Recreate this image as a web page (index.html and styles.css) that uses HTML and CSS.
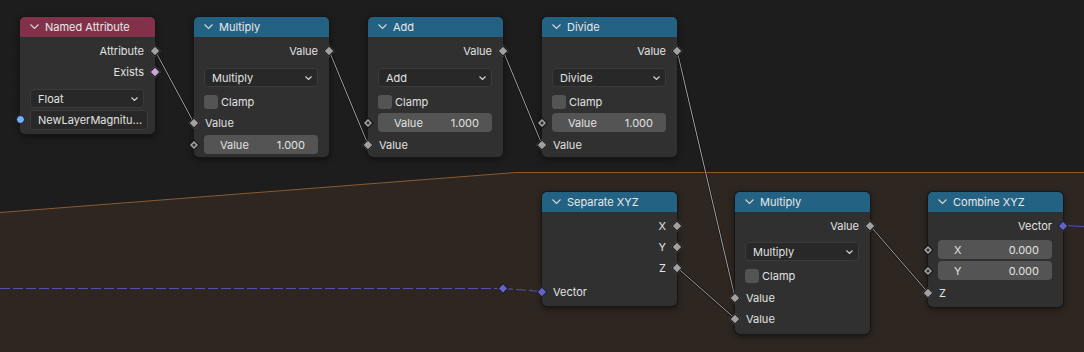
FILE: index.html
```html
<!DOCTYPE html>
<html lang="en">
<head>
    <meta charset="UTF-8">
    <title>Geometry Nodes</title>
    <link rel="stylesheet" href="styles.css">
</head>
<body>
<div class="editor">
    <svg class="backdrop" width="1084" height="352" viewBox="0 0 1084 352">
        <defs>
            <pattern id="dots" width="21" height="21" patternUnits="userSpaceOnUse">
                <rect x="10" y="10" width="1" height="1" fill="#262626"/>
            </pattern>
        </defs>
        <rect width="1084" height="352" fill="#1d1d1d"/>
        <rect width="1084" height="352" fill="url(#dots)"/>
        <!-- frame -->
        <path d="M0 212.5 L512 172.8 Q515 172.5 519 172.5 L1084 172.5 L1084 352 L0 352 Z" fill="#2e2620"/>
        <path d="M0 212.5 L512 172.8 Q515 172.5 519 172.5 L1084 172.5" fill="none" stroke="#8a5c32" stroke-width="1"/>

        <!-- wires -->
        <g class="wire-shadow">
            <line x1="155" y1="50.5" x2="194" y2="123"/>
            <line x1="329" y1="50.5" x2="368" y2="144.5"/>
            <line x1="503" y1="50.5" x2="542" y2="144.5"/>
            <line x1="677" y1="50.5" x2="735" y2="297.5"/>
            <line x1="677" y1="267.5" x2="735" y2="318.5"/>
            <line x1="870" y1="225.5" x2="928" y2="292.5"/>
        </g>
        <g class="wire">
            <line x1="155" y1="50.5" x2="194" y2="123"/>
            <line x1="329" y1="50.5" x2="368" y2="144.5"/>
            <line x1="503" y1="50.5" x2="542" y2="144.5"/>
            <line x1="677" y1="50.5" x2="735" y2="297.5"/>
            <line x1="677" y1="267.5" x2="735" y2="318.5"/>
            <line x1="870" y1="225.5" x2="928" y2="292.5"/>
        </g>
        <g class="wire-vec">
            <line x1="0" y1="288.5" x2="503" y2="288.5" stroke-dasharray="10 3"/>
            <line x1="503" y1="288.5" x2="542" y2="291.5" stroke-dasharray="10 3"/>
            <line x1="1064" y1="225.5" x2="1084" y2="226.5"/>
        </g>
        <rect class="reroute" x="499.5" y="285" width="7" height="7" transform="rotate(45 503 288.5)"/>
    </svg>

    <!-- Named Attribute -->
    <div class="node n-named">
        <div class="node-head head-attr">
            <svg class="chev" width="9" height="6" viewBox="0 0 9 6"><polyline points="0.5,0.5 4.5,4.5 8.5,0.5"/></svg>
            <span>Named Attribute</span>
        </div>
        <div class="node-body pb4">
            <div class="row out">Attribute<i class="sock s-out float"></i></div>
            <div class="row out">Exists<i class="sock s-out bool"></i></div>
            <div class="row sp6">
                <div class="select"><span>Float</span>
                    <svg class="dd" width="7" height="4" viewBox="0 0 7 4"><polyline points="0.5,0.5 3.5,3.5 6.5,0.5"/></svg>
                </div>
            </div>
            <div class="row">
                <i class="sock s-in str"></i>
                <div class="select text">NewLayerMagnitu...</div>
            </div>
        </div>
    </div>

    <!-- Multiply -->
    <div class="node n-mul1">
        <div class="node-head head-math">
            <svg class="chev" width="9" height="6" viewBox="0 0 9 6"><polyline points="0.5,0.5 4.5,4.5 8.5,0.5"/></svg>
            <span>Multiply</span>
        </div>
        <div class="node-body pb2">
            <div class="row out">Value<i class="sock s-out float"></i></div>
            <div class="row sp6">
                <div class="select"><span>Multiply</span>
                    <svg class="dd" width="7" height="4" viewBox="0 0 7 4"><polyline points="0.5,0.5 3.5,3.5 6.5,0.5"/></svg>
                </div>
            </div>
            <div class="row sp3"><span class="check"></span>Clamp</div>
            <div class="row in"><i class="sock s-in float"></i>Value</div>
            <div class="row sp1"><i class="sock s-in field"></i>
                <div class="num"><span>Value</span><span>1.000</span></div>
            </div>
        </div>
    </div>

    <!-- Add -->
    <div class="node n-add">
        <div class="node-head head-math">
            <svg class="chev" width="9" height="6" viewBox="0 0 9 6"><polyline points="0.5,0.5 4.5,4.5 8.5,0.5"/></svg>
            <span>Add</span>
        </div>
        <div class="node-body pb2">
            <div class="row out">Value<i class="sock s-out float"></i></div>
            <div class="row sp6">
                <div class="select"><span>Add</span>
                    <svg class="dd" width="7" height="4" viewBox="0 0 7 4"><polyline points="0.5,0.5 3.5,3.5 6.5,0.5"/></svg>
                </div>
            </div>
            <div class="row sp3"><span class="check"></span>Clamp</div>
            <div class="row"><i class="sock s-in field"></i>
                <div class="num"><span>Value</span><span>1.000</span></div>
            </div>
            <div class="row in sp1"><i class="sock s-in float"></i>Value</div>
        </div>
    </div>

    <!-- Divide -->
    <div class="node n-div">
        <div class="node-head head-math">
            <svg class="chev" width="9" height="6" viewBox="0 0 9 6"><polyline points="0.5,0.5 4.5,4.5 8.5,0.5"/></svg>
            <span>Divide</span>
        </div>
        <div class="node-body pb2">
            <div class="row out">Value<i class="sock s-out float"></i></div>
            <div class="row sp6">
                <div class="select"><span>Divide</span>
                    <svg class="dd" width="7" height="4" viewBox="0 0 7 4"><polyline points="0.5,0.5 3.5,3.5 6.5,0.5"/></svg>
                </div>
            </div>
            <div class="row sp3"><span class="check"></span>Clamp</div>
            <div class="row"><i class="sock s-in field"></i>
                <div class="num"><span>Value</span><span>1.000</span></div>
            </div>
            <div class="row in sp1"><i class="sock s-in float"></i>Value</div>
        </div>
    </div>

    <!-- Separate XYZ -->
    <div class="node n-sep">
        <div class="node-head head-math">
            <svg class="chev" width="9" height="6" viewBox="0 0 9 6"><polyline points="0.5,0.5 4.5,4.5 8.5,0.5"/></svg>
            <span>Separate XYZ</span>
        </div>
        <div class="node-body pb4">
            <div class="row out">X<i class="sock s-out float"></i></div>
            <div class="row out">Y<i class="sock s-out float"></i></div>
            <div class="row out">Z<i class="sock s-out float"></i></div>
            <div class="row in sp3"><i class="sock s-in vec"></i>Vector</div>
        </div>
    </div>

    <!-- Multiply (second) -->
    <div class="node n-mul2">
        <div class="node-head head-math">
            <svg class="chev" width="9" height="6" viewBox="0 0 9 6"><polyline points="0.5,0.5 4.5,4.5 8.5,0.5"/></svg>
            <span>Multiply</span>
        </div>
        <div class="node-body pb5">
            <div class="row out">Value<i class="sock s-out float"></i></div>
            <div class="row sp5">
                <div class="select"><span>Multiply</span>
                    <svg class="dd" width="7" height="4" viewBox="0 0 7 4"><polyline points="0.5,0.5 3.5,3.5 6.5,0.5"/></svg>
                </div>
            </div>
            <div class="row sp3"><span class="check"></span>Clamp</div>
            <div class="row in sp1"><i class="sock s-in float"></i>Value</div>
            <div class="row in"><i class="sock s-in float"></i>Value</div>
        </div>
    </div>

    <!-- Combine XYZ -->
    <div class="node n-comb">
        <div class="node-head head-math">
            <svg class="chev" width="9" height="6" viewBox="0 0 9 6"><polyline points="0.5,0.5 4.5,4.5 8.5,0.5"/></svg>
            <span>Combine XYZ</span>
        </div>
        <div class="node-body pb4">
            <div class="row out">Vector<i class="sock s-out vec"></i></div>
            <div class="row sp3"><i class="sock s-in field"></i>
                <div class="num"><span>X</span><span>0.000</span></div>
            </div>
            <div class="row"><i class="sock s-in field"></i>
                <div class="num"><span>Y</span><span>0.000</span></div>
            </div>
            <div class="row in sp1"><i class="sock s-in float"></i>Z</div>
        </div>
    </div>
</div>
</body>
</html>
```

FILE: styles.css
```css
* {
    box-sizing: border-box;
}

body {
    margin: 0;
    background: #1d1d1d;
    font-family: Inter, "DejaVu Sans", sans-serif;
    font-size: 11px;
    color: #e2e2e2;
}

.editor {
    position: relative;
    width: 1084px;
    height: 352px;
    overflow: hidden;
}

.backdrop {
    position: absolute;
    left: 0;
    top: 0;
}

.wire-shadow line {
    stroke: rgba(0, 0, 0, 0.45);
    stroke-width: 2.6;
}

.wire line {
    stroke: #a3a3a3;
    stroke-width: 1;
}

.wire-vec line {
    stroke: #5252b4;
    stroke-width: 1.2;
}

.reroute {
    fill: #6363c7;
    stroke: #1a1a1a;
    stroke-width: 1;
}

/* nodes */
.node {
    position: absolute;
    width: 135px;
    background: #303030;
    border-radius: 5px;
    box-shadow: 0 0 0 1px #171717, 0 2px 6px rgba(0, 0, 0, 0.55);
}

.n-named { left: 20px;  top: 17px; }
.n-mul1  { left: 194px; top: 17px; }
.n-add   { left: 368px; top: 17px; }
.n-div   { left: 542px; top: 17px; }
.n-sep   { left: 542px; top: 192px; }
.n-mul2  { left: 735px; top: 192px; }
.n-comb  { left: 928px; top: 192px; }

.node-head {
    height: 20px;
    display: flex;
    align-items: center;
    gap: 6px;
    padding-left: 10px;
    border-radius: 5px 5px 0 0;
    color: #e8e8e8;
    font-size: 11px;
}

.head-math {
    background: #246283;
}

.head-attr {
    background: #83314b;
}

.chev polyline,
.dd polyline {
    fill: none;
    stroke: #d8d8d8;
    stroke-width: 1.1;
}

.node-body {
    display: flex;
    flex-direction: column;
    padding: 3px 11px 0 10px;
}

.pb2 { padding-bottom: 2px; }
.pb4 { padding-bottom: 4px; }
.pb5 { padding-bottom: 5px; }

.sp1 { margin-top: 1px; }
.sp3 { margin-top: 3px; }
.sp5 { margin-top: 5px; }
.sp6 { margin-top: 6px; }

.row {
    position: relative;
    height: 21px;
    display: flex;
    align-items: center;
}

.row.out {
    justify-content: flex-end;
}

.row.in {
    padding-left: 1px;
}

/* sockets */
.sock {
    position: absolute;
    top: calc(50% - 4px);
    width: 8px;
    height: 8px;
    border: 1px solid #161616;
    transform: rotate(45deg);
    background: #a1a1a1;
}

.s-in {
    left: -14px;
}

.s-out {
    right: -15px;
}

.bool {
    background: #cca6d6;
}

.vec {
    background: #6363c7;
}

.field {
    background: radial-gradient(circle, #2b2b2b 0 1.2px, #a1a1a1 1.8px);
}

.str {
    transform: none;
    width: 9px;
    height: 9px;
    top: calc(50% - 4.5px);
    left: -14.5px;
    border-radius: 50%;
    background: #70b2ff;
}

/* widgets */
.select {
    flex: 1;
    height: 19px;
    display: flex;
    align-items: center;
    justify-content: space-between;
    padding: 0 5px 0 7px;
    background: #282828;
    border: 1px solid #3b3b3b;
    border-radius: 4px;
    color: #e2e2e2;
}

.select.text {
    height: 20px;
    white-space: nowrap;
}

.num {
    flex: 1;
    height: 19px;
    display: flex;
    align-items: center;
    justify-content: space-between;
    padding: 0 13px 0 16px;
    background: #545454;
    border-radius: 4px;
    color: #e2e2e2;
}

.check {
    width: 14px;
    height: 14px;
    margin-right: 3px;
    background: #545454;
    border-radius: 3px;
}
```
